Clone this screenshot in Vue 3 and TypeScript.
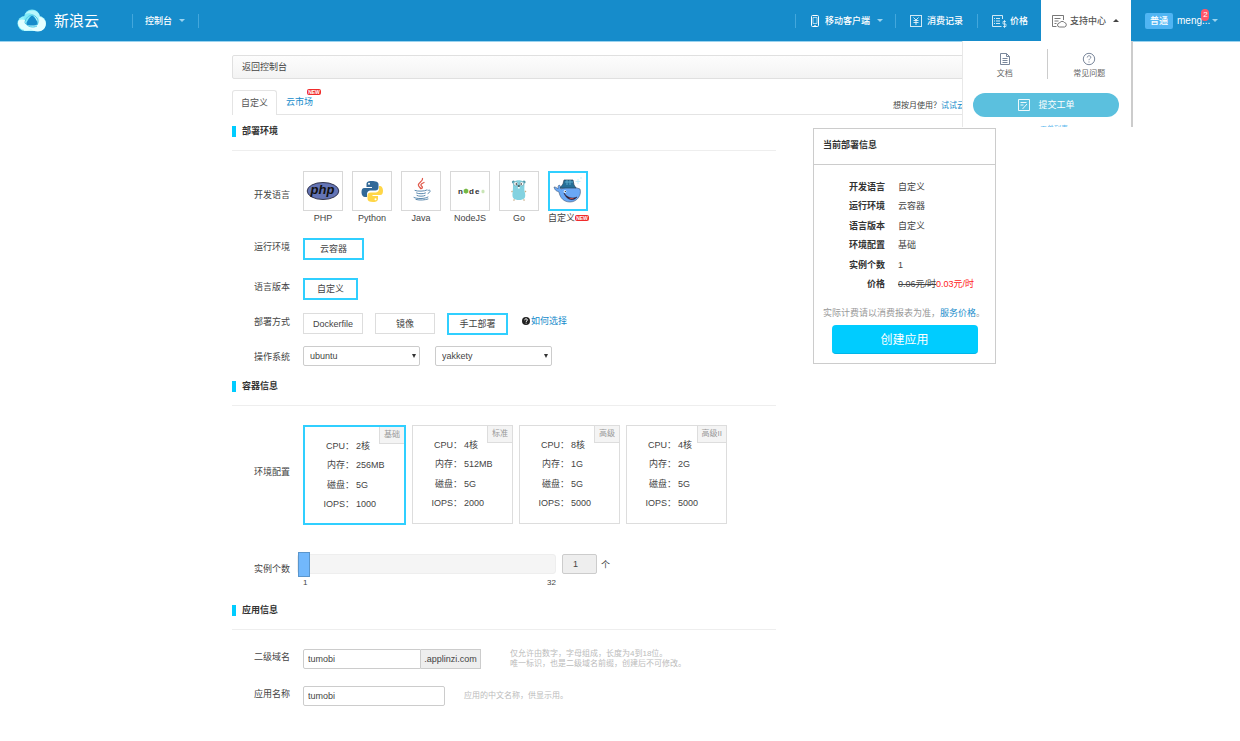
<script setup lang="ts">
import { ref } from 'vue'

const languages = [
  { id: 'php', name: 'PHP' },
  { id: 'python', name: 'Python' },
  { id: 'java', name: 'Java' },
  { id: 'node', name: 'NodeJS' },
  { id: 'go', name: 'Go' },
  { id: 'custom', name: '自定义' },
]
const language = ref('custom')

const methods = ['Dockerfile', '镜像', '手工部署']
const method = ref('手工部署')

const plans = [
  { name: '基础', cpu: '2核', memory: '256MB', disk: '5G', iops: '1000' },
  { name: '标准', cpu: '4核', memory: '512MB', disk: '5G', iops: '2000' },
  { name: '高级', cpu: '8核', memory: '1G', disk: '5G', iops: '5000' },
  { name: '高级II', cpu: '4核', memory: '2G', disk: '5G', iops: '5000' },
]
const plan = ref('基础')
const count = ref(1)
const os = ref('ubuntu')
const release = ref('yakkety')
const domain = ref('tumobi')
const appName = ref('tumobi')
</script>

<template>
  <div class="page">
    <header class="topbar">
      <a class="brand" href="#">
        <svg class="brand-mark" viewBox="0 0 30 23" aria-hidden="true">
          <circle cx="8" cy="14.5" r="7.5" fill="#8ef3fb" />
          <circle cx="21.5" cy="14.5" r="7.5" fill="#b9fbff" />
          <circle cx="15" cy="8.5" r="8" fill="#7deaf8" />
          <path d="M7 15h16v7H7z" fill="#b9fbff" />
          <path d="M1 13c0 8 9 11 17 5-5 1-9-2-10-7-3-1-6-1-7 2z" fill="#e2ffff" />
          <path d="M8 5c5-6 15-4 15 4 0 6-3 10-8 9 5-3 5-9 1-12-2-2-5-2-8-1z" fill="#b8f6fc" />
          <path d="M22 8c8 1 9 11 2 14-4 1-9 0-11-3 5 1 11-4 9-11z" fill="#e6ffff" />
          <path d="M15 6.500c1.500-.5 6.500 7 5.800 8.500C20 17 10.500 17 9.500 15.500 8.500 14 13 7 15 6.500z" fill="#168ccb" />
          <path d="M8 14c0-5 4-8 8-8M16 6c5 2 6 6 4 10M20 17c-4 2-9 1-12-3" fill="none" stroke="#4dc7e8" stroke-width="1" />
        </svg>
        <span>新浪云</span>
      </a>
      <nav class="nav-left">
        <a class="nav-item" href="#">控制台<i class="caret"></i></a>
      </nav>
      <nav class="nav-right">
        <a class="nav-item mobile" href="#">
          <svg class="icon-phone" viewBox="0 0 10 14"><rect x="1.5" y="1.5" width="7" height="11" rx="1" /><path d="M3 3.500h4v6H3zM4 11.500h2" opacity=".6" /></svg>
          移动客户端<i class="caret"></i>
        </a>
        <a class="nav-item records" href="#">
          <svg class="icon-yen" viewBox="0 0 14 14"><rect x="1.5" y="1.5" width="11" height="11" opacity=".8" /><path d="M4.500 3.500 7 6l2.500-2.500M7 6v5M4.500 6.500h5M4.500 8.500h5" opacity=".8" /></svg>
          消费记录
        </a>
        <a class="nav-item price" href="#">
          <svg class="icon-price" viewBox="0 0 16 14"><path d="M11.500 5V1.500h-10v11h9M3 4.500h1M5 4.500h4M3 7h1M5 7h4M3 9.500h1M5 9.500h4" opacity=".8" /><path d="M15 7.500h-3V10h3v2.500h-3M13.500 6v8" stroke-width=".8" opacity=".8" /></svg>
          价格
        </a>
        <a class="nav-item support" href="#">
          <svg class="icon-support" viewBox="0 0 16 14"><path d="M12.500 6V1.500h-11v11h4M3.500 4.500h6M3.500 7h4M3.500 9.500h2M8.500 13a2 2 0 0 1 0-4 3 3 0 0 1 5-.5 2.300 2.300 0 0 1 0 4.500z" stroke-width=".8" /></svg>
          支持中心<i class="caret up"></i>
        </a>
        <a class="nav-item user" href="#"><b>普通</b><span class="username">meng...<em>2</em></span><i class="caret"></i></a>
        <div class="support-menu">
          <div class="menu-links">
            <a href="#"><svg viewBox="0 0 14 14"><path d="M2.500 1.500h6l3 3v8h-9zM8.500 1.500v3h3M4.500 6.500h5M4.500 8.500h5M4.500 10.500h5" /></svg>文档</a>
            <a href="#"><svg viewBox="0 0 14 14"><circle cx="7" cy="7" r="5.700" /><path d="M5.200 5.500c.2-2.300 3.600-2.300 3.600-.2 0 1.300-1.800 1.400-1.800 2.900M7 9.500v1" /></svg>常见问题</a>
          </div>
          <button class="ticket" type="button">
            <svg viewBox="0 0 14 14"><path d="M1.500 1.500h11v11h-11zM3.500 4.500h6M3.500 7h3M5.500 11l4.500-5" stroke-width=".9" /></svg>
            提交工单
          </button>
          <a class="menu-more" href="#">工单列表</a>
        </div>
      </nav>
    </header>

    <div class="content">
      <div class="container">
        <div class="crumb"><a href="#">返回控制台</a></div>
        <div class="tabs">
          <a class="tab active" href="#">自定义</a>
          <a class="tab" href="#">云市场<span class="new">NEW</span></a>
          <p class="monthly">想按月使用？<a href="#">试试云市场</a></p>
        </div>

        <div class="columns">
          <main>
            <h2>部署环境</h2>
            <div class="row row-language">
              <span class="label">开发语言</span>
              <div class="languages">
                <button v-for="item in languages" :key="item.id" class="language" :class="{ selected: language === item.id }" type="button" @click="language = item.id">
                  <span class="logo">
                    <svg v-if="item.id === 'php'" viewBox="0 0 34 34">
                      <ellipse cx="17" cy="17" rx="15.8" ry="8.5" fill="#6474b5" stroke="#33364f" />
                      <text x="16.5" y="20" text-anchor="middle" font-size="13" font-weight="bold" font-style="italic" fill="#111">php</text>
                    </svg>
                    <svg v-else-if="item.id === 'python'" viewBox="0 0 34 34">
                      <path d="M16.500 7c-4 0-5 1.300-5 3.200V13H17v1H9.500C7 14 6.500 16 6.500 18.500S8 23 10 23h2v-3c0-2 1.500-3.500 3.500-3.500h5c1.700 0 3-1.300 3-3v-3.300C23.500 8 21 7 16.500 7z" fill="#326998" />
                      <path d="M18 28c4 0 5-1.300 5-3.200V22h-5.500v-1H25c2.500 0 3-2 3-4.500S26.500 12 25 12h-1v3c0 2-1.500 3.500-3.500 3.500h-5c-1.700 0-3 1.300-3 3v3.300c0 2.200 2 3.200 5.500 3.200z" fill="#ffd647" />
                      <circle cx="14" cy="9.800" r="1" fill="#fff" /><circle cx="20.500" cy="25.200" r="1" fill="#fff" />
                    </svg>
                    <svg v-else-if="item.id === 'java'" viewBox="0 0 34 34" fill="none" stroke-linecap="round">
                      <path d="M18.500 4.500c1 3-5 4-4 7 0 1 2 2 2 3M20 8.500c-4 1.500-3.500 3-2 4 1 1 0 2-1 2" stroke="#e05a4c" stroke-width="1.300" />
                      <path d="M11 16.500c2 1 10 1 12-.5M12.500 19c2 1 7 1 9 0M13 21.500c2 1 6 1 8 0M10 23.500c3 1.500 11 1.500 14-.5M12 25.500c4 1 9 .5 12-.5M24 16.500c3-1.500 3 1.500 0 3" stroke="#5b89ae" stroke-width="1" />
                    </svg>
                    <svg v-else-if="item.id === 'node'" viewBox="0 0 34 34">
                      <text x="5" y="20" font-size="8" font-weight="bold" fill="#333">n</text>
                      <path d="m13 14.500 2.300 1.300v2.700L13 19.800l-2.300-1.300v-2.700z" fill="#75b843" />
                      <text x="16" y="20" font-size="8" font-weight="bold" fill="#333">d</text>
                      <text x="22" y="20" font-size="8" font-weight="bold" fill="#333">e</text>
                      <path d="m30 15.500 1.500 1v2l-1.500 1-1.500-1v-2z" fill="#c9e5b6" />
                    </svg>
                    <svg v-else-if="item.id === 'go'" viewBox="0 0 34 34">
                      <circle cx="11.500" cy="8" r="1.600" fill="#4f97a8" /><circle cx="22" cy="8" r="1.600" fill="#4f97a8" />
                      <path d="M11 10c0-5 11.500-5 11.500 0 0 4-.5 5 .5 9 1 5-1 7-6 7s-7-2-6.500-6.500c.5-4 .5-5 .5-9.500z" fill="#83d2e0" />
                      <circle cx="13.800" cy="9.800" r="2" fill="#fff" stroke="#467b88" stroke-width=".4" /><circle cx="19.700" cy="9.800" r="2" fill="#fff" stroke="#467b88" stroke-width=".4" />
                      <circle cx="14.300" cy="10" r=".7" /><circle cx="19.200" cy="10" r=".7" />
                      <ellipse cx="16.800" cy="12" rx="1.200" ry=".7" fill="#333" /><path d="M15.900 13h1.800v1.500h-1.800z" fill="#fff" />
                      <path d="m10.500 17-1 1M23 17l1 1M12.500 25.500l-1 1M21.500 25.500l1 1" stroke="#c5ab86" stroke-width="1.200" />
                    </svg>
                    <svg v-else viewBox="0 0 34 34">
                      <path d="M10 15c6-3 14-2 19 0 2 6-3 13-10 13-6 0-10-4-11-10-2-1-4-1-5-5 2 0 3 1 4 2 0-2 0-3 1-4 2 1 2 2 2 4z" fill="#6aa8f5" stroke="#405777" stroke-width=".6" />
                      <path d="m12 10 1-4 9 0 1 5 2 3-11 0-5 0 3-4z" fill="#246f98" stroke="#29465b" stroke-width=".7" />
                      <path d="M14 8h8M16 6v5M19 6v5" stroke="#58a8c8" />
                      <path d="M13 19c3 5 9 6 13 4-3 4-10 4-13-4z" fill="#321f33" stroke="#321f33" stroke-width=".5" /><path d="M18 23.500c2 1 3 1 5 .5-1 1.500-4 1.500-5-.5z" fill="#e75a50" />
                      <circle cx="14" cy="17.500" r="1.300" fill="#fff" /><circle cx="14.300" cy="17.500" r=".6" />
                      <path d="M27 5v5M24.500 7.500h5M30 3v2" stroke="#b8efff" stroke-width=".8" />
                    </svg>
                  </span>
                  <span class="language-name">{{ item.name }}<span v-if="item.id === 'custom'" class="new">NEW</span></span>
                </button>
              </div>
            </div>
            <div class="row row-runtime"><span class="label">运行环境</span><button class="choice selected" type="button">云容器</button></div>
            <div class="row row-version"><span class="label">语言版本</span><button class="choice narrow selected" type="button">自定义</button></div>
            <div class="row row-method">
              <span class="label">部署方式</span>
              <div class="methods">
                <button v-for="m in methods" :key="m" class="choice" :class="{ selected: method === m }" type="button" @click="method = m">{{ m }}</button>
              </div>
              <a class="how" href="#"><svg viewBox="0 0 8 8"><circle cx="4" cy="4" r="4" fill="#222" /><path d="M2.700 3.200c0-1.800 2.700-1.800 2.700-.2 0 .9-1.300.9-1.300 1.900M4.100 5.700v.8" fill="none" stroke="#fff" /></svg>如何选择</a>
            </div>
            <div class="row row-os">
              <label class="label" for="os">操作系统</label>
              <span class="select"><select id="os" v-model="os"><option>ubuntu</option></select></span>
              <span class="select"><select v-model="release" aria-label="系统版本"><option>yakkety</option></select></span>
            </div>

            <h2>容器信息</h2>
            <div class="row row-plans">
              <span class="label">环境配置</span>
              <div class="plans">
                <button v-for="p in plans" :key="p.name" class="plan" :class="{ selected: plan === p.name }" type="button" @click="plan = p.name">
                  <span class="plan-name">{{ p.name }}</span>
                  <span class="specs">
                    <span>CPU：</span><span>{{ p.cpu }}</span>
                    <span>内存：</span><span>{{ p.memory }}</span>
                    <span>磁盘：</span><span>{{ p.disk }}</span>
                    <span>IOPS：</span><span>{{ p.iops }}</span>
                  </span>
                </button>
              </div>
            </div>
            <div class="row row-count">
              <label class="label" for="count">实例个数</label>
              <div class="slider">
                <input id="count" v-model.number="count" type="range" min="1" max="32" />
                <div class="scale"><span>1</span><span>32</span></div>
              </div>
              <input class="count-value" :value="count" aria-label="实例个数" readonly />
              <span class="unit">个</span>
            </div>

            <h2>应用信息</h2>
            <div class="row row-domain">
              <label class="label" for="domain">二级域名</label>
              <div class="domain"><input id="domain" v-model="domain" type="text" /><span>.applinzi.com</span></div>
              <p class="hint">仅允许由数字，字母组成，长度为4到18位。<br />唯一标识，也是二级域名前缀，创建后不可修改。</p>
            </div>
            <div class="row row-name">
              <label class="label" for="name">应用名称</label>
              <input id="name" v-model="appName" class="name" type="text" />
              <p class="hint">应用的中文名称，供显示用。</p>
            </div>
          </main>

          <aside>
            <h3>当前部署信息</h3>
            <dl>
              <dt>开发语言</dt><dd>自定义</dd>
              <dt>运行环境</dt><dd>云容器</dd>
              <dt>语言版本</dt><dd>自定义</dd>
              <dt>环境配置</dt><dd>{{ plan }}</dd>
              <dt>实例个数</dt><dd>{{ count }}</dd>
              <dt>价格</dt><dd><s>0.06元/时</s><strong>0.03元/时</strong></dd>
            </dl>
            <p class="note">实际计费请以消费报表为准，<a href="#">服务价格</a>。</p>
            <button class="create" type="button">创建应用</button>
          </aside>
        </div>
      </div>
    </div>
  </div>
</template>

<style>
body { margin: 0; background: #fff; }
</style>

<style scoped>
* { box-sizing: border-box; }
.page { min-width: 776px; font: 9px/14px "Liberation Sans", "Noto Sans CJK SC", sans-serif; color: #444; }
button, input, select { font: inherit; color: inherit; margin: 0; }
button { padding: 0; cursor: pointer; }
a { color: #168ccb; text-decoration: none; }
p, h2, h3, dl, dd { margin: 0; }

.topbar { display: flex; justify-content: space-between; height: 42px; background: #168ccb; border-bottom: 1px solid #9bd3ef; }
.brand { display: flex; align-items: center; gap: 7px; width: 132px; padding-left: 17px; color: #fff; font-size: 15px; }
.brand-mark { width: 30px; height: 23px; }
.nav-left { flex: 1; display: flex; align-items: center; }
.nav-right { position: relative; display: flex; align-items: center; }
.nav-item { display: flex; align-items: center; height: 14px; color: #fff; font-weight: 500; border-left: 1px solid #43a7dc; white-space: nowrap; }
.nav-left .nav-item { width: 67px; padding-left: 12px; border-right: 1px solid #43a7dc; }
.nav-item svg, .support-menu svg { fill: none; stroke: currentColor; stroke-width: 1; }
.caret { width: 0; height: 0; margin-left: 7px; border: 3px solid transparent; border-top-color: #9bd3ef; border-bottom: 0; }
.caret.up { border-top: 0; border-bottom: 3px solid #444; }
.mobile { width: 100px; padding-left: 14px; }
.records { width: 82px; padding-left: 13px; }
.price { width: 64px; padding-left: 13px; }
.icon-phone { width: 10px; height: 14px; margin-right: 5px; }
.icon-yen { width: 14px; height: 14px; margin-right: 4px; }
.icon-price, .icon-support { width: 16px; height: 14px; margin-right: 3px; }
.support { width: 90px; height: 42px; padding-left: 10px; color: #555; background: #fff; border: 0; }
.user { width: 109px; padding-left: 14px; border: 0; font-size: 10px; }
.user b { width: 28px; height: 16px; margin-right: 4px; border-radius: 2px; background: #50b5f3; font-size: 9px; line-height: 16px; font-weight: 500; text-align: center; }
.username { position: relative; }
.user .caret { margin-left: 2px; }
.username em { position: absolute; right: 1px; top: -5px; width: 8px; height: 12px; border-radius: 4px; background: #ff5668; font: normal 8px/12px "Liberation Sans", sans-serif; text-align: center; }
.support-menu { position: absolute; z-index: 2; top: 41px; right: 107px; width: 171px; height: 86px; padding: 8px 12px 0 10px; overflow: hidden; background: #fff; border-left: 1px solid #e8e8e8; border-right: 2px solid #ccc; }
.menu-links { display: flex; height: 30px; margin: 0 -12px 0 -10px; }
.menu-links a { flex: 1; display: flex; flex-direction: column; align-items: center; gap: 1px; padding-top: 3px; color: #666; font-size: 8px; }
.menu-links a + a { border-left: 1px solid #ccc; }
.menu-links svg { width: 14px; height: 14px; color: #7a879b; flex: none; }
.ticket { display: flex; align-items: center; justify-content: center; gap: 7px; width: 100%; height: 24px; margin-top: 14px; border: 0; border-radius: 12px; background: #5bc0de; color: #fff; }
.ticket svg { width: 14px; height: 14px; }
.menu-more { display: block; padding: 5px 0 0 16px; color: #5bb8ee; font-size: 7px; text-align: center; }

.content { padding: 13px 12px 0 0; }
.container { width: 764px; margin: 0 auto; }
.crumb { height: 24px; padding-left: 9px; border: 1px solid #e0e0e0; border-radius: 2px; background: linear-gradient(#fdfdfd, #f3f3f3); line-height: 22px; }
.crumb a { color: #444; }
.tabs { display: flex; height: 25px; margin-top: 11px; border-bottom: 1px solid #e4e4e4; }
.tab { position: relative; height: 25px; padding: 0 9px; line-height: 24px; white-space: nowrap; }
.tab.active { width: 45px; padding: 0 8px; color: #555; background: #fff; border: 1px solid #e4e4e4; border-bottom: 0; border-radius: 3px 3px 0 0; }
.monthly { margin-left: auto; padding: 9px 15px 0 0; font-size: 8px; white-space: nowrap; }
.new { flex: none; display: inline-block; width: 14px; height: 6px; border-radius: 2px; background: #f02c2c; color: #fff; font: bold 5px/6px "Liberation Sans", sans-serif; text-align: center; }
.tab .new { position: absolute; right: 1px; top: -1px; }

.columns { display: flex; justify-content: space-between; align-items: flex-start; padding-top: 6px; }
main { width: 544px; }
h2 { display: flex; align-items: center; gap: 6px; height: 30px; padding-bottom: 9px; border-bottom: 1px solid #eee; color: #333; font-size: 9px; }
h2::before { content: ""; width: 4px; height: 11px; background: #0cf; }
.row { display: flex; align-items: flex-start; padding-left: 22px; }
.label { width: 49px; flex: none; }
.row-language { height: 87px; padding-top: 20px; }
.row-language .label { margin-top: 17px; }
.languages { display: flex; justify-content: space-between; width: 285px; }
.language { display: flex; flex-direction: column; align-items: center; width: 40px; border: 0; background: none; }
.logo { display: block; width: 40px; height: 40px; border: 1px solid #d8d8d8; }
.logo svg { display: block; width: 34px; height: 34px; margin: 2px; }
.language.selected .logo { border: 2px solid #30cfff; }
.language.selected .logo svg { margin: 1px; }
.language-name { display: flex; align-items: center; white-space: nowrap; }
.language.selected .language-name { align-self: flex-start; }
.choice { width: 60px; height: 21px; padding: 0; border: 1px solid #ddd; background: #fff; line-height: 18px; white-space: nowrap; }
.choice.selected { width: 61px; height: 22px; border: 2px solid #30cfff; }
.choice.narrow.selected { width: 55px; }
.row-runtime { height: 40px; }
.row-version { height: 35px; }
.row-runtime .label, .row-version .label, .row-method .label { margin-top: 2px; }
.row-method { height: 33px; }
.methods { display: flex; gap: 12px; }
.how { display: flex; align-items: center; gap: 1px; margin-left: 14px; margin-top: 1px; }
.how svg { width: 8px; height: 8px; }
.row-os { height: 30px; }
.row-os .label { margin-top: 4px; }
.select { position: relative; width: 117px; margin-right: 15px; }
.select::after { content: ""; position: absolute; right: 4px; top: 8px; border: 2px solid transparent; border-top: 4px solid #333; border-bottom: 0; }
select { display: block; appearance: none; width: 100%; height: 20px; padding: 0 6px; border: 1px solid #ccc; border-radius: 2px; background: #fff; }
.row-plans { height: 145px; padding-top: 19px; }
.row-plans .label { margin-top: 40px; }
.plans { display: flex; justify-content: space-between; width: 424px; }
.plan { position: relative; display: flex; flex-direction: column; justify-content: flex-start; width: 101px; height: 99px; padding-top: 12px; border: 1px solid #ddd; background: #fff; }
.plan.selected { width: 103px; height: 100px; border: 2px solid #30cfff; }
.plan-name { position: absolute; top: 0; right: 0; height: 17px; padding: 0 4px; border-left: 1px solid #ddd; border-bottom: 1px solid #ddd; background: #f4f4f4; color: #999; font-size: 8px; line-height: 16px; }
.specs { display: grid; grid-template-columns: 49px auto; align-content: space-between; column-gap: 2px; height: 72px; text-align: left; }
.specs span:nth-child(odd) { text-align: right; }
.row-count { height: 49px; }
.row-count .label { margin-top: 11px; }
.slider { width: 259px; margin-left: -6px; }
.slider input { display: block; appearance: none; width: 100%; height: 25px; background: transparent; }
.slider input::-webkit-slider-runnable-track { height: 20px; border: 1px solid #eee; border-radius: 3px; background: #f5f5f5; }
.slider input::-webkit-slider-thumb { appearance: none; width: 12px; height: 25px; margin-top: -3px; border: 1px solid #5b96cc; background: #72b8fc; }
.scale { display: flex; justify-content: space-between; padding-left: 6px; font-size: 8px; }
.count-value { width: 35px; height: 20px; margin: 3px 4px 0 6px; padding: 0 10px; border: 1px solid #ccc; border-radius: 2px; background: #eee; }
.unit { margin-top: 7px; }
.row-domain { height: 56px; padding-top: 19px; }
.domain { display: flex; width: 178px; }
.domain input, .name { height: 20px; padding: 0 4px; border: 1px solid #ccc; border-radius: 2px; background: #fff; }
.domain input { flex: 1; min-width: 0; border-radius: 2px 0 0 2px; }
.domain span { width: 60px; border: 1px solid #ccc; border-left: 0; background: #eee; line-height: 18px; text-align: center; }
.row-domain .label, .row-name .label { margin-top: 1px; }
.hint { margin-left: 29px; color: #bbb; font-size: 8px; line-height: 10px; }
.name { width: 142px; }
.row-name .hint { margin-left: 19px; margin-top: 5px; }

aside { width: 183px; margin-top: 7px; border: 1px solid #ccc; background: #fff; }
h3 { padding: 10px 9px; height: 36px; border-bottom: 1px solid #ccc; font-size: 9px; line-height: 12px; color: #333; }
dl { display: grid; grid-template-columns: 71px 1fr; align-content: space-between; column-gap: 13px; height: 111px; margin-top: 15px; }
dt { text-align: right; font-weight: bold; color: #333; }
dd { white-space: nowrap; }
dd strong { color: #f22; font-weight: normal; }
.note { padding: 15px 0 0 9px; color: #999; white-space: nowrap; }
.create { display: block; width: 146px; height: 29px; margin: 5px auto 9px; padding-top: 2px; border: 0; border-bottom: 1px solid #00b5e8; border-radius: 4px; background: #0cf; color: #fff; font-size: 12px; }
</style>
